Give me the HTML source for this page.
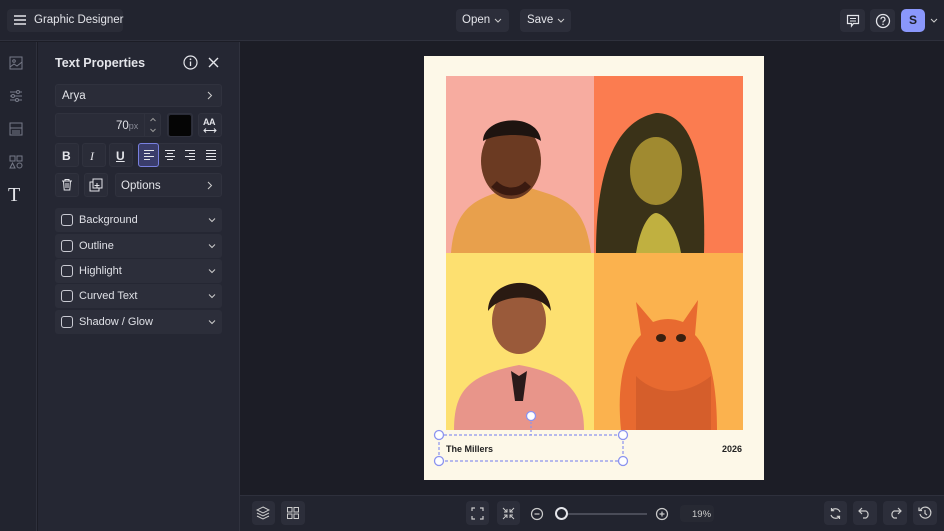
<!DOCTYPE html>
<html><head><style>
*{box-sizing:border-box;margin:0;padding:0}
body{width:944px;height:531px;overflow:hidden;background:#1c1d26;font-family:"Liberation Sans",sans-serif;color:#e4e5ea;position:relative;font-size:11px}
.a{position:absolute}
.btn{position:absolute;background:#2c2e3a;border-radius:4px}
.pb{position:absolute;background:#2a2c38;border:1px solid #30323e;border-radius:3px}
svg{display:block}
.acc{position:absolute;left:55px;width:167px;height:24px;background:#2c2e3a;border-radius:3px}
.acc .cb{position:absolute;left:6px;top:6px;width:12px;height:12px;border:1.3px solid #c9cad2;border-radius:3px}
.acc .t{position:absolute;left:24px;top:6px;font-size:11px;color:#dfe0e6}
.acc .c{position:absolute;right:6px;top:7px}
</style></head><body>
<!-- top bar -->
<div class="a" style="left:0;top:0;width:944px;height:41px;background:#22242f;border-bottom:1px solid #2e303c"></div>
<div class="btn" style="left:7px;top:9px;width:116px;height:23px;background:#2a2c37"></div>
<svg class="a" style="left:13px;top:14px" width="14" height="12"><path d="M1 2h12M1 6h12M1 10h12" stroke="#e4e5ea" stroke-width="1.4"/></svg>
<div class="a" style="left:34px;top:14px;font-size:11.5px">Graphic Designer</div>
<div class="btn" style="left:456px;top:9px;width:53px;height:23px"></div>
<div class="a" style="left:462px;top:14px;font-size:11.5px">Open</div>
<svg class="a" style="left:494px;top:18px" width="8" height="5"><path d="M1 1l3 3 3-3" stroke="#ccc" fill="none"/></svg>
<div class="btn" style="left:520px;top:9px;width:51px;height:23px"></div>
<div class="a" style="left:527px;top:14px;font-size:11.5px">Save</div>
<svg class="a" style="left:557px;top:18px" width="8" height="5"><path d="M1 1l3 3 3-3" stroke="#ccc" fill="none"/></svg>
<div class="btn" style="left:840px;top:9px;width:25px;height:23px"></div>
<svg class="a" style="left:846px;top:14px" width="14" height="14"><path d="M1.5 1.5h11v8h-5l-2 2.5v-2.5h-4z" stroke="#e4e5ea" fill="none" stroke-width="1.2"/><path d="M4 4.5h6M4 7h6" stroke="#e4e5ea"/></svg>
<div class="btn" style="left:870px;top:9px;width:25px;height:23px"></div>
<svg class="a" style="left:875px;top:13px" width="16" height="16"><circle cx="8" cy="8" r="6.5" stroke="#e4e5ea" fill="none" stroke-width="1.3"/><path d="M6 6.3a2 2 0 1 1 2.6 1.8c-.6.3-.6.7-.6 1.4" stroke="#e4e5ea" fill="none" stroke-width="1.2"/><circle cx="8" cy="11.3" r=".8" fill="#e4e5ea"/></svg>
<div class="a" style="left:901px;top:9px;width:24px;height:23px;background:#8a97fb;border-radius:5px;color:#1c1d26;font-weight:bold;font-size:12px;text-align:center;line-height:23px">S</div>
<svg class="a" style="left:930px;top:18px" width="8" height="5"><path d="M1 1l3 3 3-3" stroke="#ccc" fill="none"/></svg>
<!-- left rail -->
<div class="a" style="left:0;top:42px;width:37px;height:489px;background:#22242f;border-right:1px solid #2e303c"></div>
<svg class="a" style="left:9px;top:56px" width="14" height="14"><rect x="1" y="1" width="12" height="12" stroke="#777a88" fill="none"/><circle cx="5" cy="5" r="1.3" stroke="#777a88" fill="none"/><path d="M1 11l4-3 3 2 5-4" stroke="#777a88" fill="none"/></svg>
<svg class="a" style="left:9px;top:89px" width="14" height="14"><path d="M1 3h12M1 7h12M1 11h12" stroke="#777a88"/><circle cx="9" cy="3" r="1.5" fill="#22242f" stroke="#777a88"/><circle cx="4" cy="7" r="1.5" fill="#22242f" stroke="#777a88"/><circle cx="8" cy="11" r="1.5" fill="#22242f" stroke="#777a88"/></svg>
<svg class="a" style="left:9px;top:122px" width="14" height="14"><rect x="1" y="1" width="12" height="12" stroke="#777a88" fill="none"/><path d="M1 6h12M3 9h8M3 11h8" stroke="#777a88"/></svg>
<svg class="a" style="left:9px;top:155px" width="14" height="14"><rect x="1" y="1" width="5" height="5" stroke="#777a88" fill="none"/><rect x="8" y="1" width="5" height="5" stroke="#777a88" fill="none"/><path d="M3.5 8l2.5 5h-5z" stroke="#777a88" fill="none"/><circle cx="10.5" cy="10.5" r="2.5" stroke="#777a88" fill="none"/></svg>
<div class="a" style="left:8px;top:184px;font-family:'Liberation Serif',serif;font-size:20px;color:#e4e5ea">T</div>
<!-- panel -->
<div class="a" style="left:38px;top:42px;width:202px;height:489px;background:#252733;border-right:1px solid #30323e"></div>
<div class="a" style="left:55px;top:56px;font-size:12.5px;font-weight:bold">Text Properties</div>
<svg class="a" style="left:183px;top:55px" width="15" height="15"><circle cx="7.5" cy="7.5" r="6.5" stroke="#e4e5ea" fill="none" stroke-width="1.2"/><path d="M7.5 6.5v4.5" stroke="#e4e5ea" stroke-width="1.3"/><circle cx="7.5" cy="4.3" r=".9" fill="#e4e5ea"/></svg>
<svg class="a" style="left:208px;top:57px" width="11" height="11"><path d="M1 1l9 9M10 1l-9 9" stroke="#e4e5ea" stroke-width="1.4"/></svg>
<div class="pb" style="left:55px;top:84px;width:167px;height:23px"></div>
<div class="a" style="left:62px;top:90px;font-size:11.5px">Arya</div>
<svg class="a" style="left:207px;top:91px" width="6" height="9"><path d="M1 1l3.5 3.5L1 8" stroke="#ccc" fill="none"/></svg>
<div class="pb" style="left:55px;top:113px;width:106px;height:24px"></div>
<div class="a" style="left:116px;top:120px;font-size:11.5px">70<span style="font-size:9px;color:#888a96">px</span></div>
<div class="a" style="left:144px;top:114px;width:1px;height:22px;background:#30323e"></div>
<svg class="a" style="left:149px;top:116px" width="8" height="18"><path d="M1.5 5l2.5-2.5L6.5 5M1.5 13l2.5 2.5 2.5-2.5" stroke="#999" fill="none"/></svg>
<div class="pb" style="left:167px;top:113px;width:26px;height:24px"></div>
<div class="a" style="left:169px;top:115px;width:22px;height:21px;background:#050505;border-radius:2px"></div>
<div class="pb" style="left:198px;top:113px;width:24px;height:24px"></div>
<div class="a" style="left:203px;top:117px;font-size:9px;font-weight:bold;letter-spacing:-.5px">AA</div>
<svg class="a" style="left:203px;top:128px" width="14" height="5"><path d="M1 2.5h12M3 .5l-2 2 2 2M11 .5l2 2-2 2" stroke="#e4e5ea" fill="none"/></svg>
<div class="pb" style="left:55px;top:143px;width:24px;height:24px"></div>
<div class="a" style="left:62px;top:149px;font-weight:bold;font-size:12px">B</div>
<div class="pb" style="left:82px;top:143px;width:24px;height:24px"></div>
<div class="a" style="left:90px;top:149px;font-style:italic;font-size:12px;font-family:'Liberation Serif',serif">I</div>
<div class="pb" style="left:109px;top:143px;width:24px;height:24px"></div>
<div class="a" style="left:116px;top:149px;font-size:12px;text-decoration:underline;font-weight:bold">U</div>
<div class="pb" style="left:138px;top:143px;width:84px;height:24px"></div>
<div class="a" style="left:138px;top:143px;width:21px;height:24px;background:#3a3d6b;border:1px solid #7880e0;border-radius:3px"></div>
<svg class="a" style="left:143px;top:149px" width="75" height="12"><g stroke="#e4e5ea" stroke-width="1.1"><path d="M1 1.5h10M1 4.5h6M1 7.5h10M1 10.5h6"/><path d="M22 1.5h10M24 4.5h6M22 7.5h10M24 10.5h6"/><path d="M42 1.5h10M46 4.5h6M42 7.5h10M46 10.5h6"/><path d="M63 1.5h10M63 4.5h10M63 7.5h10M63 10.5h10"/></g></svg>
<div class="pb" style="left:55px;top:173px;width:24px;height:24px"></div>
<svg class="a" style="left:61px;top:178px" width="12" height="13"><path d="M1 3h10M4 3V1.5h4V3M2.5 3l.7 9h5.6l.7-9M5 5v5M7 5v5" stroke="#e4e5ea" fill="none"/></svg>
<div class="pb" style="left:84px;top:173px;width:24px;height:24px"></div>
<svg class="a" style="left:89px;top:178px" width="14" height="14"><rect x="4" y="1" width="9" height="9" stroke="#e4e5ea" fill="none"/><path d="M4 4H1v9h9v-3M5.5 7.5h5M8 5v5" stroke="#e4e5ea" fill="none"/></svg>
<div class="pb" style="left:115px;top:173px;width:107px;height:24px"></div>
<div class="a" style="left:121px;top:180px;font-size:11.5px">Options</div>
<svg class="a" style="left:207px;top:181px" width="6" height="9"><path d="M1 1l3.5 3.5L1 8" stroke="#ccc" fill="none"/></svg>
<div class="acc" style="top:208px"><div class="cb"></div><div class="t">Background</div><svg class="c" width="8" height="10"><path d="M1 3.5l3 3 3-3" stroke="#ccc" fill="none"/></svg></div>
<div class="acc" style="top:234px"><div class="cb"></div><div class="t">Outline</div><svg class="c" width="8" height="10"><path d="M1 3.5l3 3 3-3" stroke="#ccc" fill="none"/></svg></div>
<div class="acc" style="top:259px"><div class="cb"></div><div class="t">Highlight</div><svg class="c" width="8" height="10"><path d="M1 3.5l3 3 3-3" stroke="#ccc" fill="none"/></svg></div>
<div class="acc" style="top:284px"><div class="cb"></div><div class="t">Curved Text</div><svg class="c" width="8" height="10"><path d="M1 3.5l3 3 3-3" stroke="#ccc" fill="none"/></svg></div>
<div class="acc" style="top:310px"><div class="cb"></div><div class="t">Shadow / Glow</div><svg class="c" width="8" height="10"><path d="M1 3.5l3 3 3-3" stroke="#ccc" fill="none"/></svg></div>
<!-- page -->
<div class="a" style="left:424px;top:56px;width:340px;height:424px;background:#fdf8e8"></div>
<svg class="a" style="left:446px;top:76px" width="297" height="354">
<rect x="0" y="0" width="148" height="177" fill="#f7aca0"/>
<rect x="148" y="0" width="149" height="177" fill="#fb7c50"/>
<rect x="0" y="177" width="148" height="177" fill="#fde070"/>
<rect x="148" y="177" width="149" height="177" fill="#fbb24e"/>
<path d="M5 177c3-40 20-52 45-60l25-8 25 8c25 8 40 20 45 60z" fill="#e8a04c"/>
<ellipse cx="65" cy="85" rx="30" ry="38" fill="#6b3a22"/>
<path d="M37 65c0-25 55-30 58 0c-10-8-45-8-58 0z" fill="#1e1410"/>
<path d="M48 108c10 10 25 10 34 0" stroke="#3a1a10" stroke-width="8" fill="none"/>
<path d="M150 177c0-60 10-130 60-140c40 0 50 60 48 140z" fill="#3a3218"/>
<ellipse cx="210" cy="95" rx="26" ry="34" fill="#a08a30"/>
<path d="M190 177c5-30 15-40 20-40s20 10 25 40z" fill="#c0b040"/>
<path d="M8 354c0-40 15-55 65-65c45 8 65 25 65 65z" fill="#e8958a"/>
<ellipse cx="73" cy="245" rx="27" ry="33" fill="#9a5a3a"/>
<path d="M42 235c0-35 60-40 63 0c-10-18-50-18-63 0z" fill="#2a1a12"/>
<path d="M65 295l8 5 8-5-4 30h-8z" fill="#2a1a1a"/>
<path d="M175 354c-5-50 5-80 20-95l-5-33 17 20c10-4 20-4 30 0l15-22-3 35c15 15 22 50 22 95z" fill="#e86a30"/>
<ellipse cx="215" cy="262" rx="5" ry="4" fill="#3a2010"/><ellipse cx="235" cy="262" rx="5" ry="4" fill="#3a2010"/>
<path d="M190 300c20 20 50 20 75 0v54h-75z" fill="#c85628" opacity=".6"/>
</svg>
<div class="a" style="left:446px;top:444px;font-size:9px;font-weight:bold;color:#222">The Millers</div>
<div class="a" style="left:722px;top:444px;font-size:9px;font-weight:bold;color:#222">2026</div>
<svg class="a" style="left:432px;top:408px" width="200" height="60"><g stroke="#8b93ef" stroke-width="1.2" fill="none"><rect x="7" y="27" width="184" height="26" stroke-dasharray="3 2"/><path d="M99 14v13" stroke-dasharray="2 2"/></g><g fill="#fff" stroke="#8b93ef" stroke-width="1.3"><circle cx="99" cy="8" r="4.5"/><circle cx="7" cy="27" r="4.5"/><circle cx="191" cy="27" r="4.5"/><circle cx="7" cy="53" r="4.5"/><circle cx="191" cy="53" r="4.5"/></g></svg>
<!-- bottom bar -->
<div class="a" style="left:240px;top:495px;width:704px;height:36px;background:#22242f;border-top:1px solid #2e303c"></div>
<div class="btn" style="left:252px;top:501px;width:23px;height:24px"></div>
<svg class="a" style="left:256px;top:506px" width="14" height="14"><path d="M7 1l6 3-6 3-6-3zM1 7l6 3 6-3M1 10l6 3 6-3" stroke="#ccc" fill="none"/></svg>
<div class="btn" style="left:281px;top:501px;width:24px;height:24px"></div>
<svg class="a" style="left:287px;top:507px" width="12" height="12"><rect x=".5" y=".5" width="4.5" height="4.5" stroke="#ccc" fill="none"/><rect x="7" y=".5" width="4.5" height="4.5" stroke="#ccc" fill="none"/><rect x=".5" y="7" width="4.5" height="4.5" stroke="#ccc" fill="none"/><rect x="7" y="7" width="4.5" height="4.5" stroke="#ccc" fill="none"/></svg>
<div class="btn" style="left:466px;top:501px;width:23px;height:24px"></div>
<svg class="a" style="left:471px;top:507px" width="13" height="13"><path d="M1 4V1h3M9 1h3v3M12 9v3H9M4 12H1V9" stroke="#ccc" fill="none" stroke-width="1.2"/></svg>
<div class="btn" style="left:497px;top:501px;width:23px;height:24px"></div>
<svg class="a" style="left:502px;top:507px" width="13" height="13"><path d="M1 1l4 4M5 2v3H2M12 1L8 5M8 2v3h3M1 12l4-4M5 11V8H2M12 12L8 8M8 11V8h3" stroke="#ccc" fill="none"/></svg>
<svg class="a" style="left:530px;top:507px" width="14" height="14"><circle cx="7" cy="7" r="5.5" stroke="#ccc" fill="none" stroke-width="1.2"/><path d="M4.5 7h5" stroke="#ccc" stroke-width="1.2"/></svg>
<div class="a" style="left:561px;top:513px;width:86px;height:2px;background:#4a4c58"></div>
<div class="a" style="left:555px;top:507px;width:13px;height:13px;border:2px solid #e4e5ea;border-radius:50%;background:#22242f"></div>
<svg class="a" style="left:655px;top:507px" width="14" height="14"><circle cx="7" cy="7" r="5.5" stroke="#ccc" fill="none" stroke-width="1.2"/><path d="M4.5 7h5M7 4.5v5" stroke="#ccc" stroke-width="1.2"/></svg>
<div class="btn" style="left:680px;top:505px;width:34px;height:17px;background:#272933"></div>
<div class="a" style="left:692px;top:509px;font-size:9.5px;color:#ccc">19%</div>
<div class="btn" style="left:824px;top:501px;width:23px;height:24px"></div>
<svg class="a" style="left:829px;top:507px" width="13" height="13"><path d="M11 5A5 5 0 0 0 2.5 3.5M2 8a5 5 0 0 0 8.5 1.5M2.5 1v2.7h2.7M10.5 12V9.3H7.8" stroke="#ccc" fill="none" stroke-width="1.2"/></svg>
<div class="btn" style="left:853px;top:501px;width:24px;height:24px"></div>
<svg class="a" style="left:858px;top:507px" width="14" height="12"><path d="M4 1L1 4l3 3M1 4h7a4 4 0 0 1 0 7H5" stroke="#ccc" fill="none" stroke-width="1.2"/></svg>
<div class="btn" style="left:883px;top:501px;width:24px;height:24px"></div>
<svg class="a" style="left:888px;top:507px" width="14" height="12"><path d="M10 1l3 3-3 3M13 4H6a4 4 0 0 0 0 7h3" stroke="#ccc" fill="none" stroke-width="1.2"/></svg>
<div class="btn" style="left:913px;top:501px;width:24px;height:24px"></div>
<svg class="a" style="left:918px;top:506px" width="14" height="14"><path d="M2.5 4A5.5 5.5 0 1 1 2 8M1 1.5v3h3M7 4v3.5l2 1.5" stroke="#ccc" fill="none" stroke-width="1.2"/></svg>
</body></html>
